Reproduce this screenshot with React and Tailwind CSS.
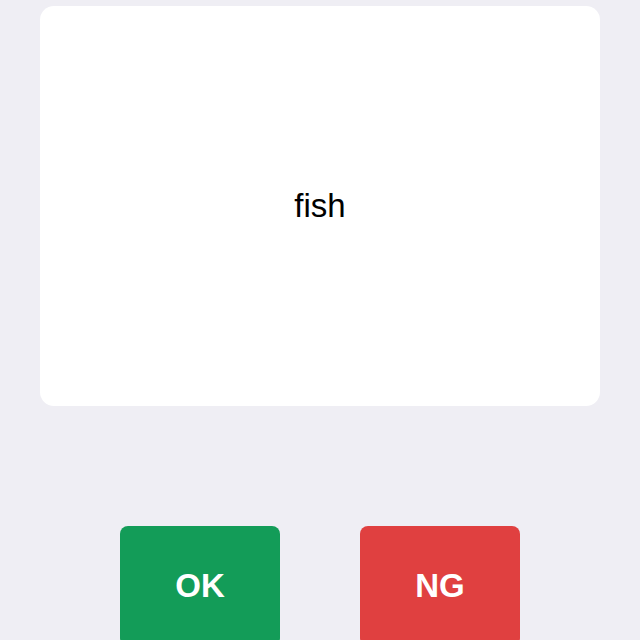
export default function App() {
  return (
    <div className="w-[640px] h-[640px] overflow-hidden bg-[#efeef4] flex flex-col items-center pt-[6px]" style={{ fontFamily: '"Liberation Sans", Arial, sans-serif' }}>
      <div className="shrink-0 w-[560px] h-[400px] bg-white rounded-[14px] flex items-center justify-center">
        <span className="text-[33px] text-black">fish</span>
      </div>
      <div className="shrink-0 mt-[120px] flex gap-[80px]">
        <button className="w-[160px] h-[120px] rounded-[8px] bg-[#139c58] text-white text-[33px] font-bold flex items-center justify-center">OK</button>
        <button className="w-[160px] h-[120px] rounded-[8px] bg-[#e04040] text-white text-[33px] font-bold flex items-center justify-center">NG</button>
      </div>
    </div>
  );
}
